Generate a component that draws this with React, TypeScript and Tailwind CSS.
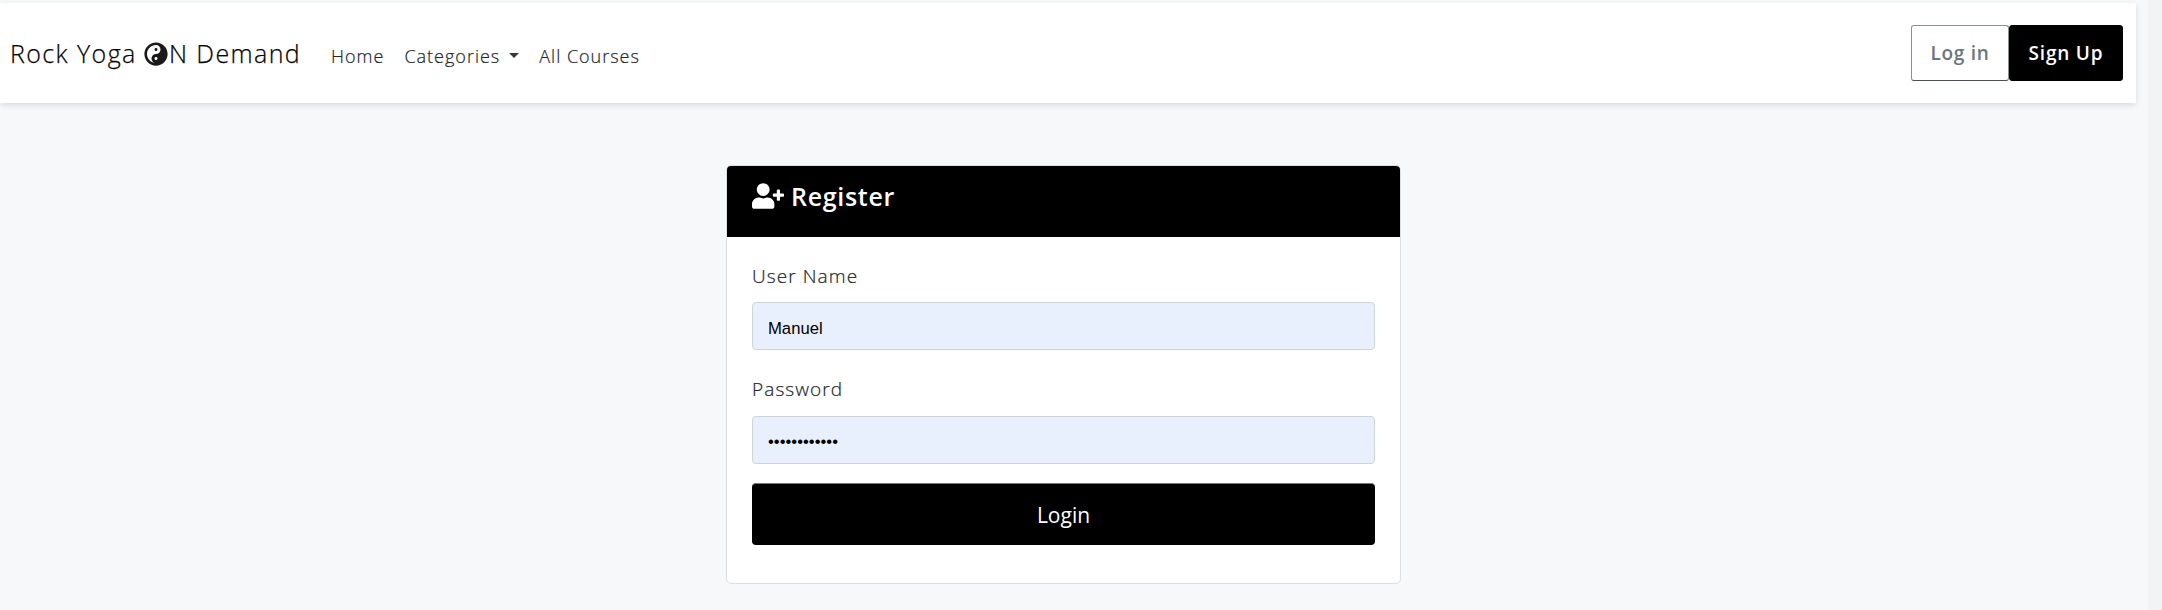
import React from "react";
import { FaUserPlus, FaYinYang } from "react-icons/fa";

function Navbar() {
  return (
    <nav className="mt-[3px] flex h-[100px] w-[2136px] items-start bg-white pl-[10px] pr-[13px] shadow-[0_2px_6px_rgba(0,0,0,0.12)]">
      <a className="mt-[34px] flex h-[34px] items-center whitespace-pre text-[25px] font-light tracking-[1.4px] text-black [-webkit-text-stroke:0.25px_#111]">
        <span className="w-[134px]">Rock Yoga </span>
        <FaYinYang className="mt-[-1px] size-[24px] text-[#1a1a1a]" />
        <span className="ml-[1px]">N Demand</span>
      </a>
      <ul className="ml-[30px] mt-[40px] flex h-[26px] items-center text-[18px] font-light tracking-[1px] text-[#212529] [-webkit-text-stroke:0.2px_#212529]">
        <li>Home</li>
        <li className="ml-[20px] flex items-center">
          Categories
          <span className="ml-[9px] mt-[-2px] border-x-[5px] border-t-[5px] border-x-transparent border-t-[#343a40]" />
        </li>
        <li className="ml-[20px]">All Courses</li>
      </ul>
      <div className="ml-auto mt-[22px] flex text-[19px] tracking-[0.9px]">
        <button className="h-[56px] w-[98px] rounded-[3px] border border-[#8b8f99] border-b-[#495057] font-semibold tracking-[0.7px] text-[#6c757d]">Log in</button>
        <button className="h-[56px] w-[114px] rounded-[3px] border border-black bg-black font-semibold tracking-[0.8px] text-white">Sign Up</button>
      </div>
    </nav>
  );
}

function Register() {
  return (
    <section className="ml-[726px] mt-[62px] h-[419px] w-[675px] overflow-hidden rounded-[5px] border border-[#dedfe0] bg-white">
      <h1 className="flex h-[71px] items-start bg-black pl-[25px] pt-[13px] text-[25px] font-semibold leading-[34px] tracking-[0.7px] text-white">
        <FaUserPlus className="mt-[4px] h-[26px] w-[32px]" />
        <span className="ml-[7px]">Register</span>
      </h1>
      <form className="pl-[25px] pr-[25px] pt-[25px] text-[19px] tracking-[1.1px] text-[#212529]">
        <label className="block h-[40px] font-light leading-[28px] [-webkit-text-stroke:0.2px_#212529]">User Name</label>
        <input
          defaultValue="Manuel"
          className="block h-[48px] w-full rounded-[4px] border border-[#ced4da] bg-[#e8f0fe] px-[15px] pt-[5px] font-['Liberation_Sans',sans-serif] text-[16.67px] font-normal tracking-normal text-black"
        />
        <label className="mt-[25px] block h-[41px] font-light leading-[28px] [-webkit-text-stroke:0.2px_#212529]">Password</label>
        <input
          type="password"
          defaultValue="abcdefghijkl"
          className="block h-[48px] w-full rounded-[4px] border border-[#ced4da] bg-[#e8f0fe] px-[15px] pt-[4px] font-['Liberation_Sans',sans-serif] text-[16.67px] font-normal tracking-normal text-black"
        />
        <button type="button" className="mt-[19px] block h-[62px] w-full rounded-[4px] border-t border-[#777] bg-black pt-[2px] text-[21px] font-normal tracking-normal text-white">
          Login
        </button>
      </form>
    </section>
  );
}

export default function App() {
  return (
    <div className="flex h-[610px] w-[2162px] overflow-hidden bg-[#f7f8fa] font-['Open_Sans',sans-serif]">
      <main className="w-[2148px] shrink-0">
        <Navbar />
        <Register />
      </main>
      <div className="w-[14px] bg-[#f1f3f5]" />
    </div>
  );
}
